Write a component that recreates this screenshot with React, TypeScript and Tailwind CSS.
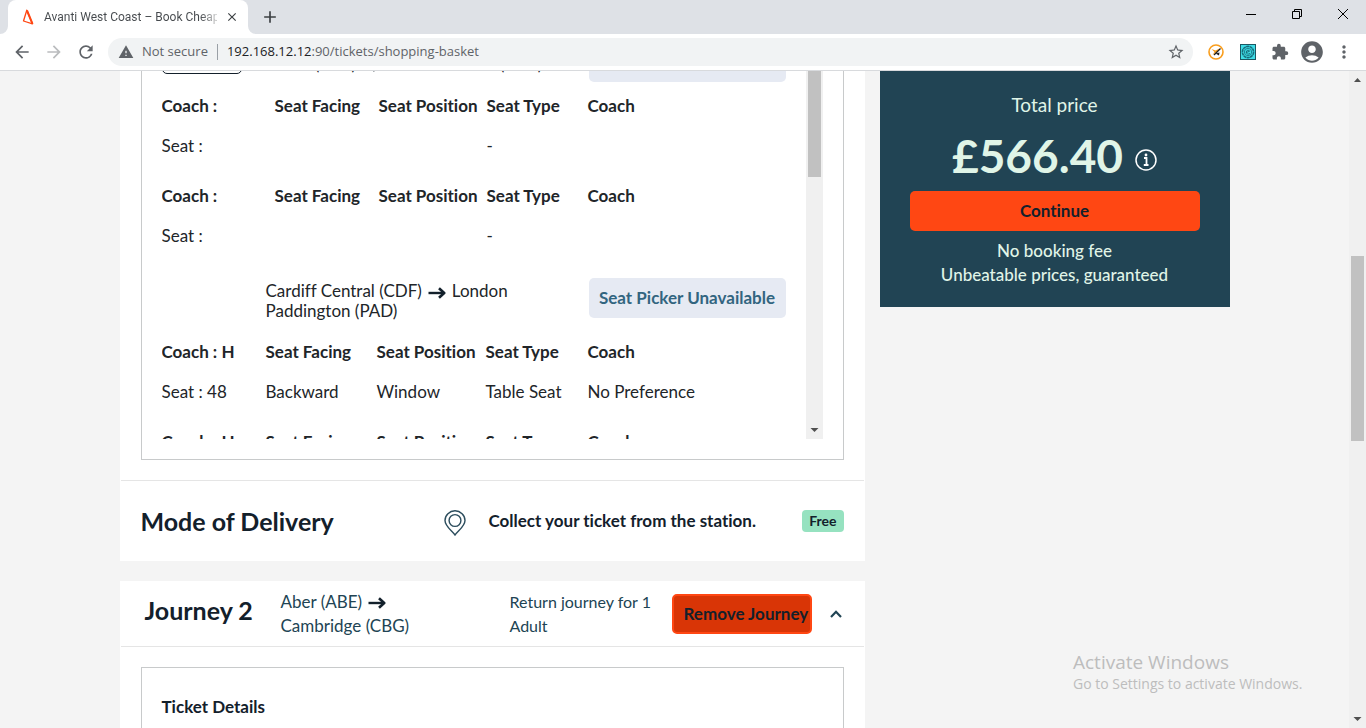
import type { ReactNode } from "react";
import {
  MdAccountCircle,
  MdAdd,
  MdArrowBack,
  MdArrowForward,
  MdClose,
  MdExtension,
  MdMoreVert,
  MdRefresh,
  MdStarBorder,
  MdWarning,
} from "react-icons/md";

const columns = ["Seat Facing", "Seat Position", "Seat Type", "Coach"];

function RouteArrow() {
  return (
    <svg viewBox="0 0 18 12" className="mx-[6px] inline-block h-3 w-[18px]" fill="none" stroke="#13202b" aria-hidden="true">
      <path d="M0.5 6H16" strokeWidth="2.4" />
      <path d="M11 1.2 16.2 6 11 10.8" strokeWidth="2.6" strokeLinejoin="round" />
    </svg>
  );
}

function BrandMark() {
  return (
    <svg viewBox="0 0 12 16" className="h-4 w-3" fill="none" stroke="#ff4713" aria-hidden="true">
      <path d="M4.800 1.200 1.500 12 10.500 14.800Z" strokeWidth="1.300" strokeLinejoin="round" />
      <path d="M5 1.500 10.500 14.800" strokeWidth="2" />
    </svg>
  );
}

function BrowserBar() {
  return (
    <header className="shrink-0 font-['Open_Sans',sans-serif]">
      <div className="flex h-[34px] bg-[#dee1e6]">
        <svg viewBox="0 0 8 8" className="h-2 w-2 self-end" fill="#fff" aria-hidden="true">
          <path d="M8 0V8H0A8 8 0 0 0 8 0" />
        </svg>
        <div className="flex w-60 items-center rounded-t-lg bg-white pl-[14px] pr-[9px]">
          <BrandMark />
          <span className="ml-[10px] flex-1 overflow-hidden whitespace-nowrap bg-linear-to-r from-[#45494d] from-90% to-[#d0d0d0] bg-clip-text font-['Roboto',sans-serif] text-[12px] text-transparent">
            Avanti West Coast – Book Cheap
          </span>
          <button type="button" aria-label="Close tab" className="ml-2 text-[#3c4043]">
            <MdClose size={14} />
          </button>
        </div>
        <svg viewBox="0 0 8 8" className="h-2 w-2 self-end" fill="#fff" aria-hidden="true">
          <path d="M0 0V8H8A8 8 0 0 1 0 0" />
        </svg>
        <button type="button" aria-label="New tab" className="ml-1 text-[#3c4043]">
          <MdAdd size={20} />
        </button>
        <div className="ml-auto flex items-center gap-9 pb-[6px] pr-[18px]">
          <button type="button" aria-label="Minimise">
            <svg viewBox="0 0 10 10" className="h-[10px] w-[10px]" stroke="#000" aria-hidden="true">
              <path d="M0 5.500H10" />
            </svg>
          </button>
          <button type="button" aria-label="Restore">
            <svg viewBox="0 0 10 10" className="h-[10px] w-[10px]" fill="none" stroke="#000" aria-hidden="true">
              <path d="M0.5 2.5h7v7h-7zM2.5 2.5v-2h7v7h-2" />
            </svg>
          </button>
          <button type="button" aria-label="Close window">
            <svg viewBox="0 0 10 10" className="h-[10px] w-[10px]" stroke="#000" aria-hidden="true">
              <path d="M0 0 10 10M10 0 0 10" />
            </svg>
          </button>
        </div>
      </div>
      <div className="flex h-[37px] items-center border-b border-[#d8dadd] bg-white pl-3 pr-3 text-[#5f6368]">
        <button type="button" aria-label="Back" className="mr-3">
          <MdArrowBack size={20} />
        </button>
        <button type="button" aria-label="Forward" className="mr-3 text-[#babcbe]">
          <MdArrowForward size={20} />
        </button>
        <button type="button" aria-label="Reload" className="mr-3">
          <MdRefresh size={20} />
        </button>
        <div className="flex h-7 flex-1 items-center rounded-full bg-[#f1f3f4] pl-[10px] pr-2 text-[13px]">
          <MdWarning size={16} />
          <span className="ml-2">Not secure</span>
          <span className="mx-[9px] h-4 w-px bg-[#9aa0a6]" />
          <span role="textbox" aria-label="Address" className="flex-1">
            <span className="text-[#202124]">192.168.12.12</span>:90/tickets/shopping-basket
          </span>
          <button type="button" aria-label="Bookmark this page">
            <MdStarBorder size={18} />
          </button>
        </div>
        <div className="ml-[15px] flex items-center gap-4">
          <svg viewBox="0 0 16 16" className="h-4 w-4" aria-hidden="true">
            <circle cx="8" cy="8" r="7" fill="#fff" stroke="#f99d1c" strokeWidth="1.600" />
            <path d="M3.500 5 7.500 6.500 11.500 4.500 9.500 7.500 4.500 11 6.500 8Z" fill="#f99d1c" />
            <path d="M12.500 4.500 6 11" stroke="#222" strokeWidth="1.300" />
            <path d="M7.500 9.500 11.500 8.500 11 11.500Z" fill="#222" />
          </svg>
          <svg viewBox="0 0 16 16" className="h-4 w-4" fill="none" stroke="#176d7c" aria-hidden="true">
            <rect x="0.5" y="0.5" width="15" height="15" fill="#3fdce6" stroke="#1b5863" />
            <circle cx="8" cy="8" r="5.600" strokeWidth="1.600" strokeDasharray="3 0.400" />
            <circle cx="8" cy="8" r="3.700" strokeWidth="0.800" />
            <path d="M6 8.600 9.700 7.200C9 5.500 6.500 6 6.200 8S8.500 10.700 10 9.500" />
          </svg>
        </div>
        <button type="button" aria-label="Extensions" className="ml-[15px]">
          <MdExtension size={18} />
        </button>
        <button type="button" aria-label="Profile" className="ml-[10px]">
          <MdAccountCircle size={26} />
        </button>
        <button type="button" aria-label="Menu" className="ml-[9px]">
          <MdMoreVert size={20} />
        </button>
      </div>
    </header>
  );
}

function ScrollArrow({ up = false }: { up?: boolean }) {
  return (
    <svg viewBox="0 0 17 17" className="h-[17px] w-[17px] shrink-0" fill="#505050" aria-hidden="true">
      <path d={up ? "M5 11 8.500 7 12 11Z" : "M4.500 6H12.500L8.500 10Z"} />
    </svg>
  );
}

function SeatTable({ coach, seat, values, wide }: { coach: string; seat: string; values: string[]; wide?: boolean }) {
  return (
    <table className="w-full table-fixed border-collapse text-left">
      <thead>
        <tr className="h-10">
          <th scope="col" className={wide ? "w-[113px] p-0" : "w-[104px] p-0"}>{coach}</th>
          <th scope="col" className={wide ? "w-[104px] p-0" : "w-[111px] p-0"}>{columns[0]}</th>
          <th scope="col" className={wide ? "w-[108px] p-0" : "w-[109px] p-0"}>{columns[1]}</th>
          <th scope="col" className={wide ? "w-[101px] p-0" : "w-[102px] p-0"}>{columns[2]}</th>
          <th scope="col" className="p-0">{columns[3]}</th>
        </tr>
      </thead>
      <tbody>
        <tr className="h-10">
          <td className="p-0">{seat}</td>
          {values.map((value, i) => (
            <td key={i} className="p-0">{value}</td>
          ))}
        </tr>
      </tbody>
    </table>
  );
}

function PickerButton() {
  return (
    <button type="button" disabled className="mr-5 h-10 w-[197px] shrink-0 rounded-[5px] bg-[#e6eaf3] font-bold text-[#326580]">
      Seat Picker Unavailable
    </button>
  );
}

function SeatList() {
  return (
    <div className="mx-[21px] border border-t-0 border-[#c8cacb] px-5 pb-5 leading-5 text-[#212529]">
      <div className="flex h-[368px]">
        <div className="min-w-0 flex-1 overflow-hidden">
          <div className="mb-1 flex h-[11px] items-end overflow-hidden">
            <button type="button" className="mb-2 h-10 w-20 shrink-0 rounded-[5px] border border-[#13202b]">
              Edit
            </button>
            <p className="mb-2 ml-[33px] flex-1 whitespace-nowrap">
              Aber (ABE)
              <RouteArrow />
              Cardiff Central (CDF)
            </p>
            <PickerButton />
          </div>
          <div className="flex flex-col gap-[10px]">
            <SeatTable wide coach="Coach :" seat="Seat :" values={["", "", "-", ""]} />
            <SeatTable wide coach="Coach :" seat="Seat :" values={["", "", "-", ""]} />
          </div>
          <div className="mb-[14px] mt-[22px] flex h-10 pl-[104px]">
            <p className="mt-[3px] flex-1 pr-10">
              Cardiff Central (CDF)
              <RouteArrow />
              London Paddington (PAD)
            </p>
            <PickerButton />
          </div>
          <div className="flex flex-col gap-[10px]">
            <SeatTable coach="Coach : H" seat="Seat : 48" values={["Backward", "Window", "Table Seat", "No Preference"]} />
            <SeatTable coach="Coach : H" seat="Seat : 49" values={["Backward", "Window", "Table Seat", "No Preference"]} />
          </div>
        </div>
        <div className="flex w-[17px] flex-col items-center justify-between bg-[#f0f0f0]">
          <div className="h-[106px] w-[13px] bg-[#c1c1c1]" />
          <ScrollArrow />
        </div>
      </div>
    </div>
  );
}

function Heading({ children }: { children: ReactNode }) {
  return <h2 className="text-[25px] font-bold leading-8 text-[#13202b]">{children}</h2>;
}

function Delivery() {
  return (
    <section className="mx-px mt-5 flex h-[81px] items-center border-t border-[#e5e5e5] px-5 text-[#13202b]">
      <div className="w-[303px]">
        <Heading>Mode of Delivery</Heading>
      </div>
      <svg viewBox="0 0 22 26" className="mt-1 h-[26px] w-[22px]" fill="none" stroke="#2c4d5d" strokeWidth="1.4" aria-hidden="true">
        <path d="M11 25C7.500 20.500 1 16 1 10.500A10 9.700 0 0 1 21 10.500C21 16 14.500 20.500 11 25Z" />
        <circle cx="11" cy="10.500" r="5.900" />
      </svg>
      <p className="ml-[23px] flex-1 font-bold">Collect your ticket from the station.</p>
      <span className="rounded bg-[#96e2c0] px-[7px] text-[14px] font-bold leading-[22px]">Free</span>
    </section>
  );
}

function JourneyTwo() {
  return (
    <section className="flex-1 bg-white">
      <div className="mx-px flex h-[66px] items-center border-b border-[#e5e5e5] pl-6 pr-[22px] leading-6 text-[#214454]">
        <div className="w-[136px] pb-2">
          <Heading>Journey 2</Heading>
        </div>
        <p className="w-[229px] pr-20">
          Aber (ABE)
          <RouteArrow />
          Cambridge (CBG)
        </p>
        <p className="flex-1 pr-4 text-[16px] leading-6">Return journey for 1 Adult</p>
        <button type="button" className="h-10 w-[140px] whitespace-nowrap rounded-[5px] border-2 border-[#ff4713] bg-[#d93506] pl-[10px] text-left font-bold text-[#13202b]">
          Remove Journey
        </button>
        <button type="button" aria-label="Collapse journey" className="ml-[18px]">
          <svg viewBox="0 0 12 8" className="h-2 w-3" fill="none" stroke="#214454" strokeWidth="2.200" aria-hidden="true">
            <path d="M1 7 6 1.800 11 7" />
          </svg>
        </button>
      </div>
      <div className="mx-[21px] mt-5 h-40 border border-[#c8cacb] px-5 pt-[27px]">
        <h3 className="font-bold leading-6 text-[#13202b]">Ticket Details</h3>
      </div>
    </section>
  );
}

function PricePanel() {
  return (
    <aside className="w-[350px] self-start bg-[#214454] px-[30px] pb-5 pt-[22px] text-center text-[#e0f5e8]">
      <h2 className="text-[19px] leading-6">Total price</h2>
      <div className="mb-[6px] mt-[10px] flex h-[58px] items-center justify-center gap-3">
        <p className="text-[46px] font-bold leading-[56px]">£566.40</p>
        <button type="button" aria-label="Price information" className="mt-2">
          <svg viewBox="0 0 22 22" className="h-[22px] w-[22px]" fill="none" stroke="#fff" strokeWidth="1.500" aria-hidden="true">
            <circle cx="11" cy="11" r="10" />
            <path d="M9 9H11.500V16M8.800 16H13.500" strokeWidth="1.800" />
            <circle cx="11" cy="6" r="1.400" fill="#fff" stroke="none" />
          </svg>
        </button>
      </div>
      <button type="button" className="h-10 w-full rounded-[5px] bg-[#ff4713] font-bold text-[#13202b]">
        Continue
      </button>
      <p className="mt-2 font-medium leading-6">No booking fee</p>
      <p className="font-medium leading-6">Unbeatable prices, guaranteed</p>
    </aside>
  );
}

export default function App() {
  return (
    <div className="relative flex h-screen flex-col overflow-hidden bg-[#f4f4f4] font-['Lato',sans-serif] text-[17px] [font-variant-ligatures:none]">
      <BrowserBar />
      <div className="flex min-h-0 flex-1">
        <div className="min-w-0 flex-1 overflow-hidden">
          <div className="mx-auto flex max-w-[1110px] gap-[15px]">
            <main className="flex min-w-0 flex-1 flex-col">
              <div className="mb-5 bg-white">
                <SeatList />
                <Delivery />
              </div>
              <JourneyTwo />
            </main>
            <PricePanel />
          </div>
        </div>
        <div className="flex w-[17px] flex-col items-center bg-[#f0f0f0]">
          <ScrollArrow up />
          <div className="flex w-full flex-1 flex-col items-center">
            <div className="grow-[168]" />
            <div className="w-[13px] grow-[185] bg-[#c1c1c1]" />
            <div className="grow-[270]" />
          </div>
          <ScrollArrow />
        </div>
      </div>
      <div className="pointer-events-none absolute bottom-[34px] right-[57px] w-[236px] font-['Open_Sans',sans-serif] text-[#bdbdbd]">
        <p className="text-[19px] leading-6">Activate Windows</p>
        <p className="text-[14px] leading-5">Go to Settings to activate Windows.</p>
      </div>
    </div>
  );
}
